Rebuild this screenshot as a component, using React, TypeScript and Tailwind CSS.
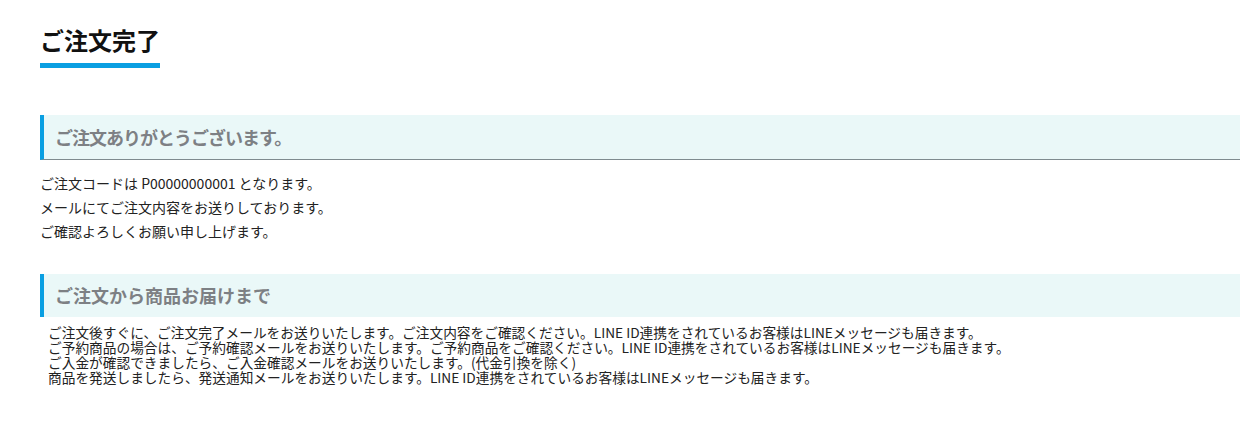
export default function App() {
  const font = { fontFamily: '"Noto Sans CJK JP", "Noto Sans", sans-serif' };
  return (
    <div className="w-[1259px] h-[438px] bg-white text-[#222]" style={font}>
      <div className="w-[1200px] ml-10 pt-[22px]">
        <h1 className="text-[24px] leading-[36px] font-bold text-[#111]">ご注文完了</h1>
        <div className="mt-[5px] h-[5px] w-[120px] bg-[#0a9fe2]" />

        <div className="mt-[47px] h-[45px] flex items-center border-l-4 border-[#0a9fe2] border-b border-b-[#7f8b8f] bg-[#eaf8f8] pl-[11px]">
          <h2 className="text-[18px] tracking-[-1px] font-bold text-[#7d8084]">ご注文ありがとうございます。</h2>
        </div>
        <div className="mt-[11px] text-[14px] leading-[24px]">
          <p>ご注文コードは P00000000001 となります。</p>
          <p>メールにてご注文内容をお送りしております。</p>
          <p>ご確認よろしくお願い申し上げます。</p>
        </div>

        <div className="mt-[31px] h-[43px] flex items-center border-l-4 border-[#0a9fe2] bg-[#eaf8f8] pl-[11px]">
          <h2 className="text-[18px] font-bold text-[#7d8084]">ご注文から商品お届けまで</h2>
        </div>
        <div className="mt-[8px] pl-2 text-[13.7px] leading-[15px]">
          <p>ご注文後すぐに、ご注文完了メールをお送りいたします。ご注文内容をご確認ください。LINE ID連携をされているお客様はLINEメッセージも届きます。</p>
          <p>ご予約商品の場合は、ご予約確認メールをお送りいたします。ご予約商品をご確認ください。LINE ID連携をされているお客様はLINEメッセージも届きます。</p>
          <p>ご入金が確認できましたら、ご入金確認メールをお送りいたします。(代金引換を除く)</p>
          <p>商品を発送しましたら、発送通知メールをお送りいたします。LINE ID連携をされているお客様はLINEメッセージも届きます。</p>
        </div>
      </div>
    </div>
  );
}
